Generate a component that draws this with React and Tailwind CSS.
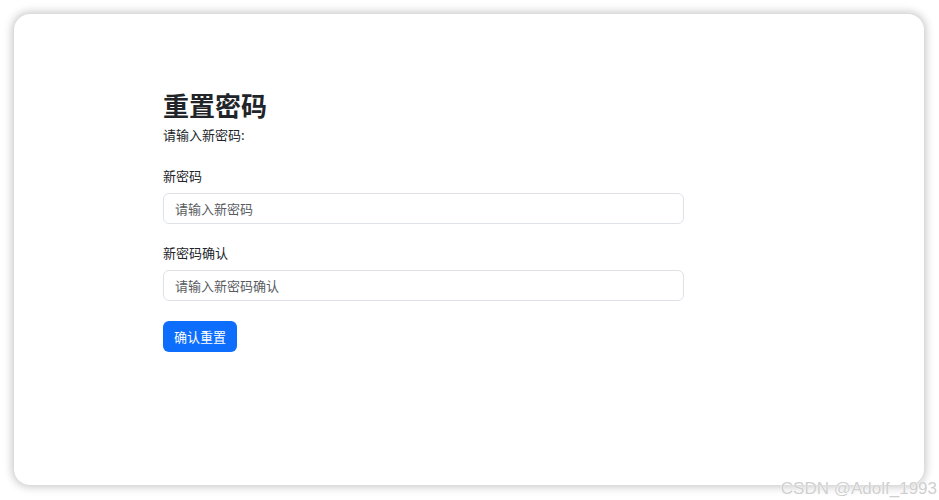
import React from 'react';

const font = { fontFamily: '"Noto Sans CJK SC", "Noto Sans", sans-serif' };

export default function App() {
  return (
    <div className="relative w-[939px] h-[500px] bg-white p-[14px] overflow-hidden" style={font}>
      <div className="w-[910px] h-[471px] bg-white rounded-[16px] shadow-[0_0_9px_2px_rgba(0,0,0,0.22)] pt-[72px] pl-[149px]">
        <div className="w-[521px] text-[#212529]">
          <h1 className="text-[26px] font-semibold leading-[38px]">重置密码</h1>
          <p className="text-[13px] leading-[20px] mt-[1px]">请输入新密码:</p>

          <label className="block text-[13px] leading-[20px] mt-[21px]">新密码</label>
          <input
            type="password"
            placeholder="请输入新密码"
            className="mt-[7px] block w-full h-[31px] px-[11px] text-[13px] border border-[#dee2e6] rounded-[6px] placeholder:text-[#595c5f] outline-none"
          />

          <label className="block text-[13px] leading-[20px] mt-[19px]">新密码确认</label>
          <input
            type="password"
            placeholder="请输入新密码确认"
            className="mt-[7px] block w-full h-[31px] px-[11px] text-[13px] border border-[#dee2e6] rounded-[6px] placeholder:text-[#595c5f] outline-none"
          />

          <button className="mt-[20px] h-[31px] px-[11px] bg-[#0d6efd] text-white text-[13px] rounded-[6px]">
            确认重置
          </button>
        </div>
      </div>
      <div
        className="absolute right-[2px] bottom-[3px] text-[17px] text-[#cfcfcf] leading-none"
        style={{ fontFamily: '"Liberation Sans", Arial, sans-serif', textShadow: '0 0 1px #fff, 0 0 1px #fff' }}
      >
        CSDN @Adolf_1993
      </div>
    </div>
  );
}
